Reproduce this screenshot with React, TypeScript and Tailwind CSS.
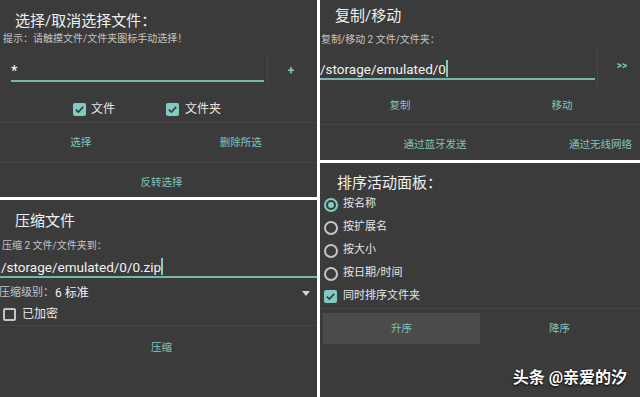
import React from 'react';

const teal = 'text-[#80c4bb]';

function CheckBox({ checked }: { checked: boolean }) {
  if (!checked) {
    return <div className="w-[13px] h-[13px] rounded-[2px] border-2 border-[#c4c4c4] shrink-0" />;
  }
  return (
    <div className="w-[13px] h-[13px] rounded-[2px] bg-[#80cbc4] shrink-0 flex items-center justify-center">
      <svg width="13" height="13" viewBox="0 0 13 13">
        <polyline points="2.8,6.6 5.4,9.1 10.2,3.9" fill="none" stroke="#3b3b3b" strokeWidth="1.7" />
      </svg>
    </div>
  );
}

function Radio({ on }: { on?: boolean }) {
  return (
    <div
      className={
        'w-[14px] h-[14px] rounded-full border-2 shrink-0 flex items-center justify-center ' +
        (on ? 'border-[#80cbc4]' : 'border-[#c4c4c4]')
      }
    >
      {on && <div className="w-[6px] h-[6px] rounded-full bg-[#80cbc4]" />}
    </div>
  );
}

export default function App() {
  const sortBy = ['按名称', '按扩展名', '按大小', '按日期/时间'];

  return (
    <div className="w-[640px] h-[397px] bg-white flex gap-[3px] overflow-hidden font-['Roboto','Noto_Sans_CJK_SC',sans-serif]">
      {/* left column */}
      <div className="w-[317px] flex flex-col gap-[3px]">
        {/* select / deselect */}
        <div className="h-[197px] bg-[#3b3b3b] flex flex-col">
          <div className="pt-[11px] pl-[15px] text-[15px] leading-[20px] text-[#f0f0f0]">选择/取消选择文件：</div>
          <div className="mt-[1px] pl-[3px] text-[10px] leading-[14px] text-[#c4c4c4]">提示：请触摸文件/文件夹图标手动选择！</div>
          <div className="mt-[9px] h-[32px] flex">
            <div className="w-[267px] pl-[11px] pr-[3px]">
              <div className="h-[27px] border-b-2 border-[#76b7ad] flex items-end pb-[1px]">
                <span className="text-[15px] leading-[16px] text-white">*</span>
              </div>
            </div>
            <div className={'flex-1 border-l border-[#474747] flex items-center justify-center pr-[3px] text-[12px] font-bold ' + teal}>+</div>
          </div>
          <div className="h-[35px] pt-[16px] pl-[73px] flex items-start">
            <div className="w-[93px] flex items-center gap-[5px]">
              <CheckBox checked />
              <span className="text-[12px] leading-[13px] text-[#e6e6e6]">文件</span>
            </div>
            <div className="flex items-center gap-[6px]">
              <CheckBox checked />
              <span className="text-[12px] leading-[13px] text-[#e6e6e6]">文件夹</span>
            </div>
          </div>
          <div className={'h-[40px] border-t border-[#454545] grid grid-cols-2 items-center text-center text-[10.5px] ' + teal}>
            <span className="pl-[3px]">选择</span>
            <span className="pl-[6px]">删除所选</span>
          </div>
          <div className={'flex-1 border-t border-[#454545] flex justify-center pt-[13px] pl-[6px] text-[10.5px] leading-[14px] ' + teal}>
            反转选择
          </div>
        </div>

        {/* compress */}
        <div className="flex-1 bg-[#3b3b3b] flex flex-col">
          <div className="pt-[11px] pl-[15px] text-[15px] leading-[20px] text-[#f0f0f0]">压缩文件</div>
          <div className="mt-[8px] pl-[2px] text-[10px] leading-[14px] text-[#c4c4c4]">压缩 2 文件/文件夹到：</div>
          <div className="h-[25px] border-b-2 border-[#76b7ad] flex items-end pl-[1px]">
            <span className="text-[13.5px] leading-[18px] text-[#f2f2f2]">/storage/emulated/0/0.zip</span>
            <span className="w-[2px] h-[17px] bg-[#80cbc4] mb-[1px]" />
          </div>
          <div className="mt-[5px] h-[20px] flex items-center">
            <span className="text-[11px] text-[#c4c4c4] -ml-[1px]">压缩级别：</span>
            <span className="ml-[1px] text-[12px] text-[#f0f0f0]">6 标准</span>
            <svg className="ml-auto mr-[7px]" width="8" height="5" viewBox="0 0 8 5">
              <polygon points="0,0 8,0 4,5" fill="#d4d4d4" />
            </svg>
          </div>
          <div className="mt-[1px] h-[20px] pl-[3px] flex items-center gap-[6px]">
            <CheckBox checked={false} />
            <span className="text-[12px] text-[#e6e6e6]">已加密</span>
          </div>
          <div className={'h-[44px] mt-[1px] border-t border-[#454545] flex items-center justify-center pl-[6px] text-[10.5px] ' + teal}>
            压缩
          </div>
        </div>
      </div>

      {/* right column */}
      <div className="w-[320px] flex flex-col gap-[3px]">
        {/* copy / move */}
        <div className="h-[160px] bg-[#3b3b3b] flex flex-col overflow-hidden">
          <div className="pt-[6px] pl-[15px] text-[15px] leading-[20px] text-[#f0f0f0]">复制/移动</div>
          <div className="mt-[7px] pl-[1px] text-[10px] leading-[14px] text-[#c4c4c4]">复制/移动 2 文件/文件夹：</div>
          <div className="mt-[1px] h-[39px] flex">
            <div className="w-[277px] pr-[2px]">
              <div className="h-[32px] border-b-2 border-[#76b7ad] flex items-end">
                <span className="text-[13.5px] leading-[18px] text-[#f2f2f2]">/storage/emulated/0</span>
                <span className="w-[2px] h-[17px] bg-[#80cbc4] mb-[1px]" />
              </div>
            </div>
            <div className={'flex-1 border-l border-[#474747] flex items-center justify-center pl-[6px] pb-[4px] text-[10px] font-bold ' + teal}>
              &gt;&gt;
            </div>
          </div>
          <div className={'h-[37px] grid grid-cols-2 items-center text-center text-[10.5px] ' + teal}>
            <span>复制</span>
            <span className="pl-[4px]">移动</span>
          </div>
          <div className={'flex-1 border-t border-[#454545] flex pt-[13px] text-[10.5px] leading-[14px] whitespace-nowrap ' + teal}>
            <span className="w-[120px] ml-[55px] text-center">通过蓝牙发送</span>
            <span className="ml-[74px]">通过无线网络</span>
          </div>
        </div>

        {/* sort */}
        <div className="flex-1 bg-[#3b3b3b] relative flex flex-col">
          <div className="pt-[10px] pl-[17px] text-[15px] leading-[20px] text-[#f0f0f0]">排序活动面板：</div>
          {sortBy.map((s, i) => (
            <div key={s} className="h-[23px] pl-[4px] flex items-center gap-[5px]">
              <Radio on={i === 0} />
              <span className="text-[11px] text-[#e6e6e6]">{s}</span>
            </div>
          ))}
          <div className="h-[23px] pl-[4px] flex items-center gap-[6px]">
            <CheckBox checked />
            <span className="text-[11px] text-[#e6e6e6]">同时排序文件夹</span>
          </div>
          <div className="border-t border-[#454545] pt-[4px] flex">
            <div className={'ml-[3px] w-[157px] h-[31px] bg-[#4b4b4b] flex items-center justify-center text-[10.5px] ' + teal}>升序</div>
            <div className={'flex-1 h-[31px] flex items-center justify-center pr-[1px] text-[10.5px] ' + teal}>降序</div>
          </div>
          <div className="absolute right-[13px] bottom-[9px] text-[16px] leading-[20px] font-bold text-white [text-shadow:0_1px_2px_rgba(0,0,0,0.9),0_0_1px_rgba(0,0,0,0.9)]">
            头条 @亲爱的汐
          </div>
        </div>
      </div>
    </div>
  );
}
